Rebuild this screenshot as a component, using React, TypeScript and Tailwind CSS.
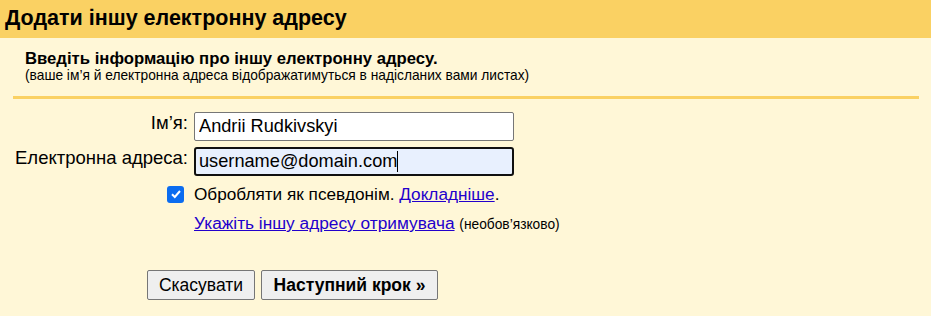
import React from 'react';

const App: React.FC = () => {
  return (
    <div className="w-[931px] h-[316px] bg-[#fff7d7] font-['Liberation_Sans',Arial,sans-serif] text-black overflow-hidden">
      <div className="h-[38px] bg-[#fad163] flex items-center pl-[5px]">
        <h1 className="text-[21.5px] font-bold leading-none">Додати іншу електронну адресу</h1>
      </div>

      <div className="px-[13px] pt-[11px]">
        <div className="pl-[12px]">
          <div className="text-[16.7px] font-bold leading-[19px]">Введіть інформацію про іншу електронну адресу.</div>
          <div className="text-[13.75px] leading-[16px]">(ваше ім’я й електронна адреса відображатимуться в надісланих вами листах)</div>
        </div>
        <div className="mt-[12px] h-[3px] w-[906px] bg-[#fad163]" />
      </div>

      <div className="mt-[13px] grid grid-cols-[188px_320px] gap-x-[6px] gap-y-[6px] items-start">
        <label className="text-right text-[18.5px] leading-[20px] pt-[1px]">Ім’я:</label>
        <input
          defaultValue="Andrii Rudkivskyi"
          className="h-[29px] w-[320px] bg-white border border-[#767676] rounded-[2px] px-[4px] text-[18.2px] outline-none"
        />
        <label className="text-right text-[18.5px] leading-[20px] pt-[1px]">Електронна адреса:</label>
        <div className="h-[29px] w-[320px] bg-[#e8f0fe] border-2 border-[#101010] rounded-[3px] px-[3px] text-[18.2px] flex items-center">
          <span>username@domain.com</span>
          <span className="w-px h-[21px] bg-black" />
        </div>
      </div>

      <div className="mt-[8px] flex items-center pl-[167px]">
        <span className="w-[17px] h-[17px] rounded-[3px] bg-[#0b6cf0] flex items-center justify-center">
          <svg width="12" height="12" viewBox="0 0 12 12">
            <path d="M2 6.3 L4.8 9 L10 3" fill="none" stroke="white" strokeWidth="2" />
          </svg>
        </span>
        <span className="ml-[10px] text-[17.2px] leading-[20px]">
          Обробляти як псевдонім. <a className="text-[#2200cc] underline">Докладніше</a>.
        </span>
      </div>

      <div className="mt-[9px] pl-[194px] text-[17.3px] leading-[20px]">
        <a className="text-[#2200cc] underline">Укажіть іншу адресу отримувача</a>{' '}
        <span className="text-[13.75px]">(необов’язково)</span>
      </div>

      <div className="mt-[35px] pl-[147px] flex gap-[6px]">
        <button className="h-[30px] w-[108px] bg-[#efefef] border border-[#767676] rounded-[2px] text-[17.5px]">Скасувати</button>
        <button className="h-[30px] w-[177px] bg-[#efefef] border border-[#767676] rounded-[2px] text-[17.5px] font-bold">Наступний крок »</button>
      </div>
    </div>
  );
};

export default App;
